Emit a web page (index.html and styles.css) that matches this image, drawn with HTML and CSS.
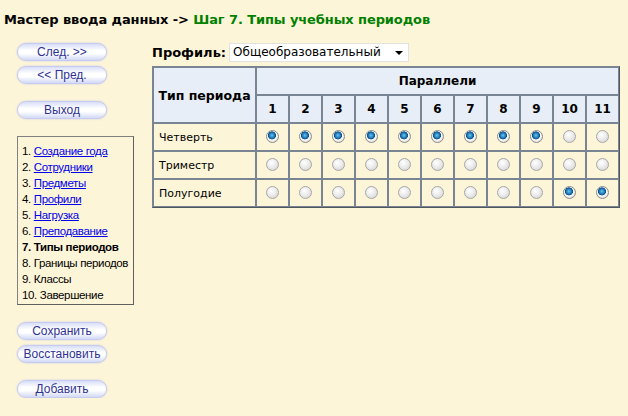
FILE: index.html
```html
<!DOCTYPE html>
<html lang="ru">
<head>
    <meta charset="UTF-8">
    <title>Мастер ввода данных</title>
    <link rel="stylesheet" href="styles.css">
</head>
<body>
<div class="page-title">
    Мастер ввода данных -&gt; <span class="step">Шаг 7. Типы учебных периодов</span>
</div>
<div class="wizard">
    <div class="sidebar">
        <div class="btn-group">
            <button class="pill">След. &gt;&gt;</button>
            <button class="pill">&lt;&lt; Пред.</button>
        </div>
        <div class="btn-group">
            <button class="pill">Выход</button>
        </div>
        <ol class="steps">
            <li>1. <a href="#">Создание года</a></li>
            <li>2. <a href="#">Сотрудники</a></li>
            <li>3. <a href="#">Предметы</a></li>
            <li>4. <a href="#">Профили</a></li>
            <li>5. <a href="#">Нагрузка</a></li>
            <li>6. <a href="#">Преподавание</a></li>
            <li class="current">7. Типы периодов</li>
            <li>8. Границы периодов</li>
            <li>9. Классы</li>
            <li>10. Завершение</li>
        </ol>
        <div class="btn-group">
            <button class="pill">Сохранить</button>
            <button class="pill">Восстановить</button>
        </div>
        <div class="btn-group">
            <button class="pill">Добавить</button>
        </div>
    </div>
    <div class="content">
        <div class="profile-row">
            <label for="profile">Профиль:</label>
            <div class="select-box" id="profile">
                <span>Общеобразовательный</span>
                <span class="arrow"></span>
            </div>
        </div>
        <table class="periods">
            <thead>
            <tr>
                <th rowspan="2" class="type-col">Тип периода</th>
                <th colspan="11">Параллели</th>
            </tr>
            <tr>
                <th>1</th><th>2</th><th>3</th><th>4</th><th>5</th><th>6</th>
                <th>7</th><th>8</th><th>9</th><th>10</th><th>11</th>
            </tr>
            </thead>
            <tbody id="period-rows"></tbody>
        </table>
    </div>
</div>
<script>
    const periods = [
        { name: 'Четверть', key: 'q', grades: [1, 2, 3, 4, 5, 6, 7, 8, 9] },
        { name: 'Триместр', key: 't', grades: [] },
        { name: 'Полугодие', key: 'h', grades: [10, 11] }
    ];
    const body = document.getElementById('period-rows');
    periods.forEach(function (p) {
        const tr = document.createElement('tr');
        const td = document.createElement('td');
        td.className = 'type-name';
        td.textContent = p.name;
        tr.appendChild(td);
        for (let g = 1; g <= 11; g++) {
            const cell = document.createElement('td');
            const radio = document.createElement('input');
            radio.type = 'radio';
            radio.name = 'grade' + g;
            radio.checked = p.grades.indexOf(g) !== -1;
            cell.appendChild(radio);
            tr.appendChild(cell);
        }
        body.appendChild(tr);
    });
</script>
</body>
</html>
```

FILE: styles.css
```css
body {
    margin: 0;
    padding: 0;
    background-color: #fdf5d8;
    font-family: "DejaVu Sans", Verdana, sans-serif;
    color: #000000;
}

.page-title {
    font-size: 13px;
    font-weight: bold;
    padding: 12px 4px 0 4px;
    height: 31px;
    box-sizing: border-box;
    letter-spacing: -0.1px;
}

.page-title .step {
    color: #008000;
}

.wizard {
    display: flex;
    align-items: flex-start;
    padding-top: 10px;
}

/* Левая колонка */
.sidebar {
    width: 135px;
    padding-left: 17px;
    box-sizing: border-box;
    display: flex;
    flex-direction: column;
    gap: 17px;
    margin-top: 2px;
}

.btn-group {
    display: flex;
    flex-direction: column;
    gap: 5px;
}

.pill {
    width: 90px;
    height: 18px;
    padding: 0;
    border: 1px solid #c6cbef;
    border-radius: 9px;
    background: linear-gradient(#d8def9, #ffffff 40%, #ffffff 60%, #d2d9f6);
    box-shadow: 0 0 2px #c2c7ea;
    font-family: "Liberation Sans", Arial, sans-serif;
    font-size: 12px;
    color: #2e3192;
    cursor: pointer;
}

.steps {
    list-style: none;
    margin: 0;
    padding: 6px 0 3px 4px;
    width: 117px;
    height: 169px;
    box-sizing: border-box;
    border: 1px solid #808080;
    border-right-color: #606060;
    border-bottom-color: #606060;
    font-family: "Liberation Sans", Arial, sans-serif;
    font-size: 11.5px;
    letter-spacing: -0.35px;
    line-height: 16px;
    white-space: nowrap;
}

.steps a {
    color: #0000ee;
}

.steps .current {
    font-weight: bold;
}

/* Основная часть */
.content {
    padding-left: 17px;
}

.profile-row {
    display: flex;
    align-items: center;
    gap: 3px;
    height: 20px;
    margin-bottom: 4px;
    margin-top: 1px;
}

.profile-row label {
    font-size: 13px;
    font-weight: bold;
}

.select-box {
    width: 180px;
    height: 19px;
    box-sizing: border-box;
    background-color: #ffffff;
    border: 1px solid #e2e2e2;
    font-size: 12px;
    display: flex;
    align-items: center;
    justify-content: space-between;
    padding: 0 5px 0 3px;
}

.select-box .arrow {
    width: 0;
    height: 0;
    border-left: 4px solid transparent;
    border-right: 4px solid transparent;
    border-top: 4px solid #000000;
    margin-top: 2px;
}

.periods {
    border-collapse: separate;
    border-spacing: 0;
    border: 1px solid #7a8594;
    border-right-color: #4f5660;
    border-bottom-color: #4f5660;
}

.periods th,
.periods td {
    border: 1px solid #7a8594;
    text-align: center;
    padding: 0;
}

.periods th {
    background-color: #e8eef7;
    font-size: 12px;
    font-weight: bold;
    height: 26px;
    width: 31px;
}

.periods th.type-col {
    width: 101px;
    font-size: 12.5px;
}

.periods td {
    height: 26px;
}

.periods td.type-name {
    text-align: left;
    padding-left: 5px;
    font-size: 11px;
}

.periods input[type="radio"] {
    appearance: none;
    -webkit-appearance: none;
    width: 13px;
    height: 13px;
    margin: 3px 0 0 0;
    border-radius: 50%;
    border: 1px solid #a7a7a7;
    background: radial-gradient(circle at 40% 35%, #ffffff 0%, #ececec 45%, #cfcfcf 100%);
    box-sizing: border-box;
}

.periods input[type="radio"]:checked {
    border-color: #8c8c8c;
    background: radial-gradient(circle at 45% 40%, #6fc3ee 0%, #1a77b6 30%, #0f4f86 42%, #ffffff 48%, #e4e4e4 70%, #c9c9c9 100%);
}
```
